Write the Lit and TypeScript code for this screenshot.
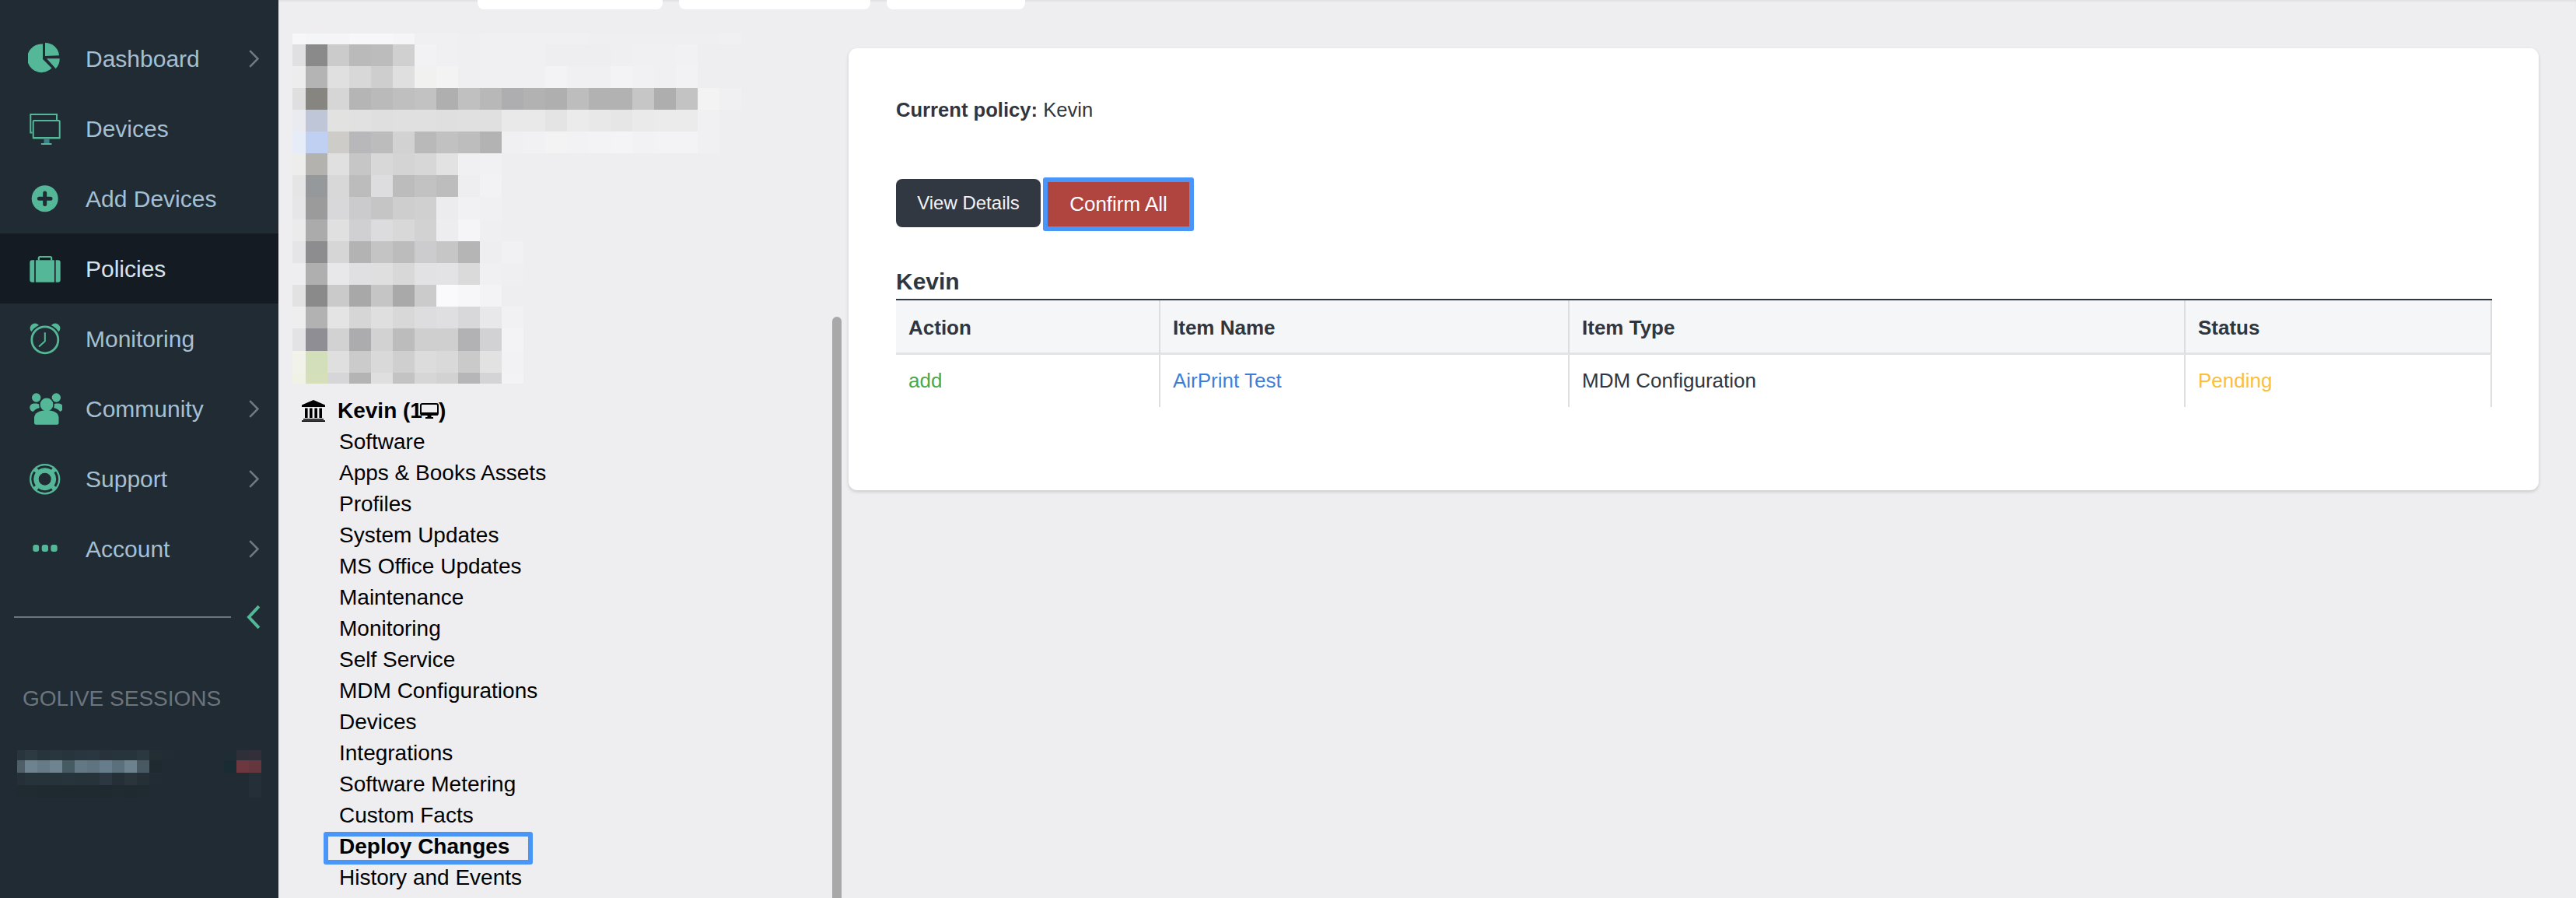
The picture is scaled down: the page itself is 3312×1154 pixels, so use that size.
import { LitElement, html, css, svg } from "lit";
import { customElement } from "lit/decorators.js";

const G = "#54b898";
const BG = "#212b34";

const treeCols = [17, ...Array(21).fill(28)];
const treeRows = [14, 28, 28, 28, 28, 28, 28, 28, 29, 28, 28, 28, 28, 28, 29, 28, 14];
const treePixels = [
  "f7f7f9 f4f5f7 f5f5f7 f7f7f9 f7f7f9 f5f5f7 f0f0f2 f0f0f2 efeff1 f0f0f2 f0f0f2 f0f0f2 f0f0f2 f0f0f2 efeff1 efeff1 efeff1 efeff1 efeff1 efeff1 f0f0f2",
  "e0e0e2 8a8a8a cbcbcb bababa bcbcbd d0d0d0 f2f2f4 f0f0f2 efeff1 f0f0f2 f0f0f2 f0f0f2 eeeef0 eeeef0 eeeef0 efeff1 f0f0f2 f0f0f2 f1f1f3",
  "ededed b4b4b4 e0e0e0 d8d8d8 cecece dfdfe0 f1f1f0 f3f3f3 efeff1 f0f0f2 f0f0f2 f0f0f2 f3f3f5 f0f0f2 f0f0f2 f3f3f5 f1f1f3 f0f0f2 f2f2f4",
  "dfdfdf 868580 d6d6d6 b5b5b5 bababa bfbfbf c2c2c2 afafb0 c0c0c0 b8b8b8 aeaeb0 b2b2b2 afafaf bdbdbd b2b2b2 b2b2b2 c6c6c6 aeaeae c3c3c4 f3f3f4 f0f0f2",
  "eaebf1 bec6d8 e2e2e1 e1e1e2 dfdfe0 e0e0e1 e0e0e1 dfdfe0 e0e0e1 e0e0e0 e9e9ea e9e9ea e4e4e5 ebebec e8e8e9 e6e6e7 eaeaeb ebebec ebebec f0f0f2",
  "e6ecf8 bfd0f2 cdccc8 b8b8ba bcbcbc d2d2d2 b9b9b9 c1c1c2 bdbdbe b3b3b3 f0f0f2 f1f1f3 f3f3f4 f2f2f4 f3f3f5 f4f4f6 f2f2f4 f3f3f5 f3f3f5 f0f0f2",
  "ededec b3b2af e0e0e1 c6c6c7 d8d8d8 d4d4d5 d7d7d8 e2e2e3 f0f0f2 f1f1f3",
  "e5e5e5 96999b d8d8d8 bcbcbc dddddf bcbcbc c2c2c3 bdbdbe eeeef0 f2f2f4",
  "e6e6e8 9b9b9b d8d8da cbcbcd c5c5c5 cecece d0d0d0 ececee f1f1f3 f0f0f2",
  "ebebeb ababab e0e0e1 d0d0d2 dcdcde d8d8d8 d2d2d3 ededef f5f5f7 efeff1",
  "e5e5e7 8d8d8f d6d6d6 b3b3b4 c4c4c5 bcbcbc ccccce c6c6c6 b5b5b6 eeeef0 f1f1f3",
  "eeeef0 afafaf e8e8ea e0e0e2 dfdfe0 d8d8d9 e2e2e4 e3e3e5 dadada f0f0f2 efeff1",
  "e2e2e2 8a8a8a cacacb a8a8a9 c5c5c6 a9a9a9 cbcbcc fafafc f7f7f9 f3f3f5",
  "eeeeee b2b2b2 e4e4e5 d6d6d6 dfdfe0 d8d8d8 dddddf dfdfe1 d8d8da e8e8ea f1f1f3",
  "e3e3e5 8e8e94 d2d2d3 acacae d2d2d2 bcbcbc cfcfcf cfcfd0 b2b2b4 d2d2d4 f3f3f5",
  "f1f2ea d3deba dfdfe0 cbcbcc d9d9d9 cfcfd0 dcdcdc d9d9d9 cacaca e2e2e3 f2f2f4",
  "f0f2e6 d5e0bb d6d6d8 b4b4b4 dfdfdf c3c3c3 d6d6d7 d2d2d3 b6b6b8 d4d4d6 f3f3f5",
];

const sessCols = [10, ...Array(21).fill(16)];
const sessRows = [13, 16, 16, 16];
const sessPixels = [
  "28353d 2d3a42 28343c 2a363e 28343c 2a363f 2b3740 27323b 28343c 28343c 2c3840 232d34 222c34 212b34 212b34 212b34 212b34 1f2c34 2f2f39 322f3a",
  "4e5f6a 6e8390 667a87 6f8491 465a63 637885 5f7480 667e8b 5a707c 6d828f 485963 1e2a30 212b34 212b34 212b34 212b34 212b34 1a2c33 6c373f 65363e",
  "252f37 27333b 27333b 27333b 28343c 27333b 27323a 2b3841 252f37 29343b 242f36 222c34 212b34 212b34 212b34 212b34 212b34 212b34 212b34 252f37",
  "202a31 1f2a31 1f2930 1f2930 1f2930 1f2930 1f2930 1e2a30 202a31 1f2930 202a31 212b34 212b34 212b34 212b34 212b34 212b34 212b34 212b34 252f37",
];

const icons: Record<string, unknown> = {
  dashboard: svg`
    <path d="M19 3.6V23L30.5 34.5A18.3 18.3 0 1 1 19 3.6Z"/>
    <path d="M22 2V19L40 18.2A18 18 0 0 0 22 2Z"/>
    <path d="M24 22.3H40.7A18 18 0 0 1 35.7 35.3Z"/>`,
  devices: svg`
    <path d="M5.5 27.6H3.3V4H37V11" fill="none" stroke=${G} stroke-width="2"/>
    <rect x="6.7" y="11.9" width="34" height="22" rx="1" fill="none" stroke=${G} stroke-width="2"/>
    <rect x="5.7" y="33" width="36" height="2.6" rx="1"/>
    <rect x="20.5" y="35.6" width="7" height="5.4" fill="#3f7f8c"/>
    <rect x="16.7" y="41" width="14" height="2" rx="1"/>`,
  add: svg`
    <circle cx="21.7" cy="22.3" r="17"/>
    <path d="M21.7 15V29.6M14.4 22.3H29" fill="none" stroke=${BG} stroke-width="5" stroke-linecap="round"/>`,
  policies: svg`
    <path d="M13.8 11.5V8.5A1.5 1.5 0 0 1 15.3 7H28.7A1.5 1.5 0 0 1 30.2 8.5V11.5" fill="none" stroke=${G} stroke-width="2.2"/>
    <path d="M5.3 11.3H8.2V39.7H5.3A3 3 0 0 1 2.3 36.7V14.3A3 3 0 0 1 5.3 11.3Z"/>
    <rect x="9.8" y="11.3" width="24.2" height="28.4"/>
    <path d="M35.6 11.3H38.7A3 3 0 0 1 41.7 14.3V36.7A3 3 0 0 1 38.7 39.7H35.6Z"/>`,
  monitoring: svg`
    <circle cx="9" cy="9" r="6.4"/>
    <circle cx="35" cy="9" r="6.4"/>
    <circle cx="21.8" cy="24" r="20.5" fill=${BG}/>
    <circle cx="21.8" cy="23.8" r="17" fill="none" stroke=${G} stroke-width="2.8"/>
    <path d="M21.8 14.3V25.5L14 32.5" fill="none" stroke=${G} stroke-width="2"/>`,
  community: svg`
    <circle cx="10.7" cy="8" r="5.7"/>
    <circle cx="36.3" cy="8" r="5.7"/>
    <rect x="2.2" y="15.5" width="14" height="10.5" rx="5.2"/>
    <rect x="31" y="15.5" width="14" height="10.5" rx="5.2"/>
    <circle cx="24" cy="17" r="10" fill=${BG}/>
    <path d="M5 42V32C5 24 12 20 24 20S43 24 43 32V42Z" fill=${BG}/>
    <circle cx="24" cy="17" r="8.4"/>
    <path d="M8 40.2V34C8 28 14 24.2 24 24.2S39.5 28 39.5 34V40.2A2.5 2.5 0 0 1 37 42.7H10.5A2.5 2.5 0 0 1 8 40.2Z"/>`,
  support: svg`
    <circle cx="21.7" cy="22.7" r="19.7"/>
    <circle cx="21.7" cy="22.7" r="8" fill=${BG}/>
    <g fill="none" stroke=${BG} stroke-width="3">
      <path d="M12.5 9.6A16.2 16.2 0 0 1 30.9 9.6"/>
      <path d="M34.8 13.5A16.2 16.2 0 0 1 34.8 31.9"/>
      <path d="M30.9 35.8A16.2 16.2 0 0 1 12.5 35.8"/>
      <path d="M8.6 31.9A16.2 16.2 0 0 1 8.6 13.5"/>
    </g>`,
  account: svg`
    <rect x="6.3" y="17" width="7.8" height="9" rx="3"/>
    <rect x="17.7" y="17" width="8.3" height="9" rx="3"/>
    <rect x="29.3" y="17" width="8.4" height="9" rx="3"/>`,
};

const navItems = [
  { key: "dashboard", label: "Dashboard", chevron: true },
  { key: "devices", label: "Devices", chevron: false },
  { key: "add", label: "Add Devices", chevron: false },
  { key: "policies", label: "Policies", chevron: false, active: true },
  { key: "monitoring", label: "Monitoring", chevron: false },
  { key: "community", label: "Community", chevron: true },
  { key: "support", label: "Support", chevron: true },
  { key: "account", label: "Account", chevron: true },
];

const treeItems = [
  "Software", "Apps & Books Assets", "Profiles", "System Updates", "MS Office Updates",
  "Maintenance", "Monitoring", "Self Service", "MDM Configurations", "Devices",
  "Integrations", "Software Metering", "Custom Facts",
];

function pixelBlock(cols: number[], rows: number[], data: string[]) {
  const tpl = `${cols.map((c) => c + "px").join(" ")}`;
  const rowTpl = `${rows.map((c) => c + "px").join(" ")}`;
  const cells: unknown[] = [];
  data.forEach((row, r) => {
    row.split(" ").forEach((c, i) => {
      cells.push(html`<i style="grid-row:${r + 1};grid-column:${i + 1};background:#${c}"></i>`);
    });
  });
  return html`<div class="pixels" style="grid-template-columns:${tpl};grid-template-rows:${rowTpl}">${cells}</div>`;
}

@customElement("app-root")
export class AppRoot extends LitElement {
  static styles = css`
    :host {
      display: flex;
      width: 3312px;
      height: 1154px;
      overflow: hidden;
      background: #eeeef0;
      font-family: "Liberation Sans", Arial, sans-serif;
      color: #000;
    }
    * { box-sizing: border-box; }
    .pixels { display: grid; }
    .pixels i { display: block; }

    .sidebar {
      width: 358px;
      flex: none;
      height: 100%;
      background: #212b34;
      padding-top: 30px;
      display: flex;
      flex-direction: column;
    }
    .nav {
      height: 90px;
      display: flex;
      align-items: center;
      padding: 0 25px 0 36px;
      font-size: 30px;
      color: #a4c0d2;
    }
    .nav.active { background: #151b22; color: #d6e4ee; }
    .nav svg.ic { width: 44px; height: 44px; flex: none; fill: #54b898; margin-right: 30px; }
    .nav span { flex: 1; padding-top: 2px; }
    .chev { width: 13px; height: 23px; flex: none; fill: none; stroke: #6f7a82; stroke-width: 2.6; }
    .collapse {
      display: flex;
      align-items: center;
      margin-top: 26px;
      height: 34px;
      padding: 0 23px 0 18px;
    }
    .collapse .line { width: 280px; height: 2px; background: #6e757b; margin-right: 20px; }
    .collapse svg { width: 18px; height: 32px; fill: none; stroke: #54b898; stroke-width: 4; }
    .sess-label {
      margin: 70px 0 0 29px;
      font-size: 28px;
      line-height: 36px;
      color: #6c757c;
    }
    .sess { margin: 48px 0 0 22px; }

    .main { flex: 1; min-width: 0; display: flex; flex-direction: column; }
    .tabs {
      height: 12px;
      flex: none;
      display: flex;
      gap: 21px;
      padding-left: 256px;
      box-shadow: inset 0 2px 2px rgba(0, 0, 0, 0.05);
    }
    .tabs i { display: block; background: #fff; border-radius: 0 0 8px 8px; }
    .t1 { width: 238px; }
    .t2 { width: 246px; }
    .t3 { width: 178px; }
    .body { flex: 1; display: flex; min-height: 0; }

    .tree {
      width: 733px;
      flex: none;
      position: relative;
      padding: 31px 0 0 18px;
    }
    .scroll {
      position: absolute;
      right: 9px;
      top: 395px;
      bottom: -8px;
      width: 12px;
      border-radius: 6px;
      background: #a8a8a8;
    }
    .tree-head {
      margin-top: 15px;
      height: 40px;
      display: flex;
      align-items: center;
      font-size: 28px;
      font-weight: 700;
      line-height: 40px;
    }
    .bank { width: 30px; height: 28px; margin: 0 16px 0 12px; flex: none; }
    .mini { width: 24px; height: 20px; margin: 0 0 0 -3px; flex: none; }
    .tree-list { padding-left: 60px; font-size: 28px; line-height: 40px; }
    .tree-list div { height: 40px; white-space: nowrap; }
    .tree-list .deploy { font-weight: 700; position: relative; }
    .tree-list .hl {
      position: absolute;
      left: -20px;
      top: 1px;
      width: 269px;
      height: 42px;
      border: 6px solid #4a96f8;
      border-radius: 3px;
    }

    .content { flex: 1; padding: 50px 48px 0 0; }
    .card {
      height: 568px;
      background: #fff;
      border-radius: 11px;
      box-shadow: 0 2px 4px rgba(0, 0, 0, 0.16);
      padding: 59px 60px 0 61px;
      color: #2f3640;
      font-size: 26px;
    }
    .policy { line-height: 40px; height: 40px; font-size: 25.6px; }
    .btns { display: flex; align-items: flex-start; margin-top: 67px; height: 69px; }
    .btn {
      color: #fff;
      display: flex;
      align-items: center;
      justify-content: center;
    }
    .view {
      width: 186px;
      height: 62px;
      margin: 2px 3px 0 0;
      background: #323842;
      border-radius: 8px;
      font-size: 24px;
      color: #f2f3f4;
    }
    .confirm {
      width: 194px;
      height: 69px;
      background: #b0443f;
      border: 6px solid #4a96f8;
      border-radius: 3px;
      font-size: 26px;
    }
    h2 {
      margin: 43px 0 0;
      height: 46px;
      font-size: 30px;
      line-height: 44px;
      font-weight: 700;
      border-bottom: 2px solid #323842;
    }
    .tbl {
      display: grid;
      grid-template-columns: 340px 526px 792px 394px;
    }
    .tbl > div {
      padding-left: 16px;
      border-right: 2px solid #dedee0;
      display: flex;
      align-items: center;
      white-space: nowrap;
    }
    .tbl > .th {
      height: 70px;
      padding-top: 3px;
      background: #f5f6f8;
      border-bottom: 3px solid #e3e3e5;
      font-weight: 700;
    }
    .td { height: 67px; }
    .add { color: #4aa84a; }
    .link { color: #3d7fd8; }
    .pending { color: #fbbf3c; }
  `;

  render() {
    return html`
      <aside class="sidebar">
        ${navItems.map(
          (n) => html`
            <div class="nav ${n.active ? "active" : ""}">
              <svg class="ic" viewBox="0 0 44 44">${icons[n.key]}</svg>
              <span>${n.label}</span>
              ${n.chevron
                ? html`<svg class="chev" viewBox="0 0 13 23"><path d="M1.2 1.2L11.5 11.5L1.2 21.8"/></svg>`
                : ""}
            </div>
          `
        )}
        <div class="collapse">
          <div class="line"></div>
          <svg viewBox="0 0 18 32"><path d="M16 2L3 16L16 30"/></svg>
        </div>
        <div class="sess-label">GOLIVE SESSIONS</div>
        <div class="sess">${pixelBlock(sessCols, sessRows, sessPixels)}</div>
      </aside>
      <div class="main">
        <div class="tabs"><i class="t1"></i><i class="t2"></i><i class="t3"></i></div>
        <div class="body">
          <section class="tree">
            ${pixelBlock(treeCols, treeRows, treePixels)}
            <div class="tree-head">
              <svg class="bank" viewBox="0 0 30 28">
                <path d="M15 0L30 6.5V9H0V6.5Z"/>
                <rect x="4" y="10.5" width="3.6" height="12.5"/>
                <rect x="10" y="10.5" width="3.6" height="12.5"/>
                <rect x="16.4" y="10.5" width="3.6" height="12.5"/>
                <rect x="22.4" y="10.5" width="3.6" height="12.5"/>
                <rect x="2" y="24" width="26" height="1.6"/>
                <rect x="0" y="26.2" width="30" height="1.8"/>
              </svg>
              <span>Kevin (1</span>
              <svg class="mini" viewBox="0 0 24 20">
                <rect x="1" y="1" width="22" height="14" rx="2" fill="none" stroke="#000" stroke-width="2"/>
                <rect x="1" y="12" width="22" height="4" rx="1"/>
                <rect x="9.5" y="16" width="5" height="2.5"/>
                <rect x="7" y="18" width="10" height="2"/>
              </svg>
              <span>)</span>
            </div>
            <div class="tree-list">
              ${treeItems.map((t) => html`<div>${t}</div>`)}
              <div class="deploy">Deploy Changes<div class="hl"></div></div>
              <div>History and Events</div>
            </div>
            <div class="scroll"></div>
          </section>
          <section class="content">
            <div class="card">
              <div class="policy"><b>Current policy:</b> Kevin</div>
              <div class="btns">
                <div class="btn view">View Details</div>
                <div class="btn confirm">Confirm All</div>
              </div>
              <h2>Kevin</h2>
              <div class="tbl">
                <div class="th">Action</div>
                <div class="th">Item Name</div>
                <div class="th">Item Type</div>
                <div class="th">Status</div>
                <div class="td add">add</div>
                <div class="td link">AirPrint Test</div>
                <div class="td">MDM Configuration</div>
                <div class="td pending">Pending</div>
              </div>
            </div>
          </section>
        </div>
      </div>
    `;
  }
}
